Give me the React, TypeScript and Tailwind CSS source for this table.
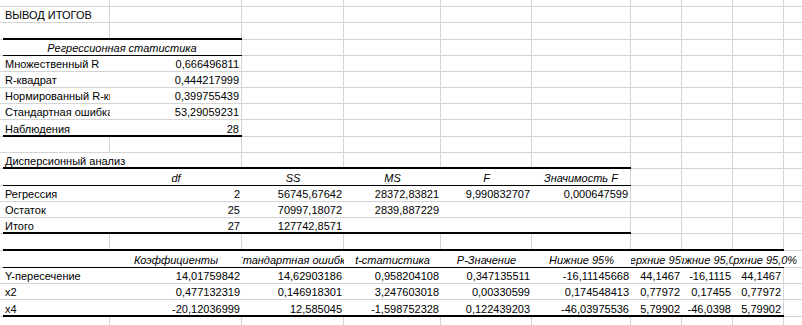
type Cell = {
  t: string;
  a: "l" | "r" | "c";
  i?: boolean;
  span?: number;
  spill?: "both" | "right";
};

// column widths incl. right gridline; col 0 is the sliver left of A
const COLS = [3, 107, 132, 102, 97, 91, 99, 51, 51, 51, 40];
const HEIGHTS = [7, 16, 17, 16, 16, 16, 16, 16, 17, 16, 16, 17, 16, 16, 16, 17, 17, 16, 16, 17, 9];

const TABLES = [
  { head: 3, last: 8, c0: 1, c1: 2 },
  { head: 11, last: 14, c0: 1, c1: 6 },
  { head: 16, last: 19, c0: 1, c1: 9 },
];

const L = (t: string): Cell => ({ t, a: "l" });
const N = (t: string): Cell => ({ t, a: "r" });
const H = (t: string): Cell => ({ t, a: "c", i: true });

const SHEET: (Cell | null)[][] = [
  [],
  [L("ВЫВОД ИТОГОВ")],
  [],
  [{ t: "Регрессионная статистика", a: "c", i: true, span: 2 }],
  [L("Множественный R"), N("0,666496811")],
  [L("R-квадрат"), N("0,444217999")],
  [L("Нормированный R-квадрат"), N("0,399755439")],
  [L("Стандартная ошибка"), N("53,29059231")],
  [L("Наблюдения"), N("28")],
  [],
  [{ t: "Дисперсионный анализ", a: "l", spill: "both" }],
  [null, H("df"), H("SS"), H("MS"), H("F"), H("Значимость F")],
  [L("Регрессия"), N("2"), N("56745,67642"), N("28372,83821"), N("9,990832707"), N("0,000647599")],
  [L("Остаток"), N("25"), N("70997,18072"), N("2839,887229")],
  [L("Итого"), N("27"), N("127742,8571")],
  [],
  [
    null,
    H("Коэффициенты"),
    H("Стандартная ошибка"),
    H("t-статистика"),
    H("P-Значение"),
    H("Нижние 95%"),
    H("Верхние 95%"),
    H("Нижние 95,0%"),
    { t: "Верхние 95,0%", a: "c", i: true, spill: "right" },
  ],
  [
    L("Y-пересечение"),
    N("14,01759842"),
    N("14,62903186"),
    N("0,958204108"),
    N("0,347135511"),
    N("-16,11145668"),
    N("44,1467"),
    N("-16,1115"),
    N("44,1467"),
  ],
  [
    L("x2"),
    N("0,477132319"),
    N("0,146918301"),
    N("3,247603018"),
    N("0,00330599"),
    N("0,174548413"),
    N("0,77972"),
    N("0,17455"),
    N("0,77972"),
  ],
  [
    L("x4"),
    N("-20,12036999"),
    N("12,585045"),
    N("-1,598752328"),
    N("0,122439203"),
    N("-46,03975536"),
    N("5,79902"),
    N("-46,0398"),
    N("5,79902"),
  ],
  [],
];

function edge(r: number, c: number): "none" | "thin" | "thick" {
  const tb = TABLES.find((t) => c >= t.c0 && c <= t.c1 && r >= t.head - 1 && r <= t.last);
  if (!tb) return "none";
  if (r === tb.head - 1 || r === tb.last) return "thick";
  if (r === tb.head) return "thin";
  return "none";
}

function SheetCell({ r, c, cell, width }: { r: number; c: number; cell: Cell | null; width: number }) {
  const last = c + (cell?.span ?? 1) - 1;
  const inside = TABLES.some((t) => r >= t.head && r <= t.last && last >= t.c0 && last < t.c1);
  const showRight = c > 0 && !inside && !cell?.spill;
  const line = edge(r, c);

  const align =
    cell?.a === "r" ? "justify-end pr-[2px]" : cell?.a === "c" ? "justify-center" : "justify-start pl-[2px]";
  const clip =
    cell?.spill === "both"
      ? "overflow-visible"
      : cell?.spill === "right"
        ? "[clip-path:inset(0_-80px_0_0)]"
        : "overflow-hidden";

  return (
    <div
      className={`relative h-full shrink-0 border-b border-b-[#d4d4d4] ${
        showRight ? "border-r border-r-[#d4d4d4]" : "border-r-0"
      }`}
      style={{ width }}
    >
      {cell && (
        <div className={`flex h-full w-full items-end whitespace-nowrap pb-[1px] ${align} ${clip} ${cell.i ? "italic" : ""}`}>
          {cell.t}
        </div>
      )}
      {line === "thick" && (
        <div className={`absolute bottom-[-1px] left-0 h-[2px] bg-black ${showRight ? "right-[-1px]" : "right-0"}`} />
      )}
      {line === "thin" && (
        <div className={`absolute bottom-[-1px] left-0 h-px bg-black ${showRight ? "right-[-1px]" : "right-0"}`} />
      )}
    </div>
  );
}

function SheetRow({ r }: { r: number }) {
  const row = SHEET[r] ?? [];
  const cells = [];
  for (let c = 0; c < COLS.length; c++) {
    const cell = c > 0 ? row[c - 1] ?? null : null;
    const last = c + (cell?.span ?? 1) - 1;
    let width = 0;
    for (let k = c; k <= last; k++) width += COLS[k];
    cells.push(<SheetCell key={c} r={r} c={c} cell={cell} width={width} />);
    c = last;
  }
  return (
    <div className="flex" style={{ height: HEIGHTS[r] }}>
      {cells}
    </div>
  );
}

export default function App() {
  return (
    <div className="h-[325px] w-[802px] overflow-hidden bg-white font-['Liberation_Sans',Arial,sans-serif] text-[11px] leading-[12px] text-black">
      {HEIGHTS.map((_, r) => (
        <SheetRow key={r} r={r} />
      ))}
    </div>
  );
}
